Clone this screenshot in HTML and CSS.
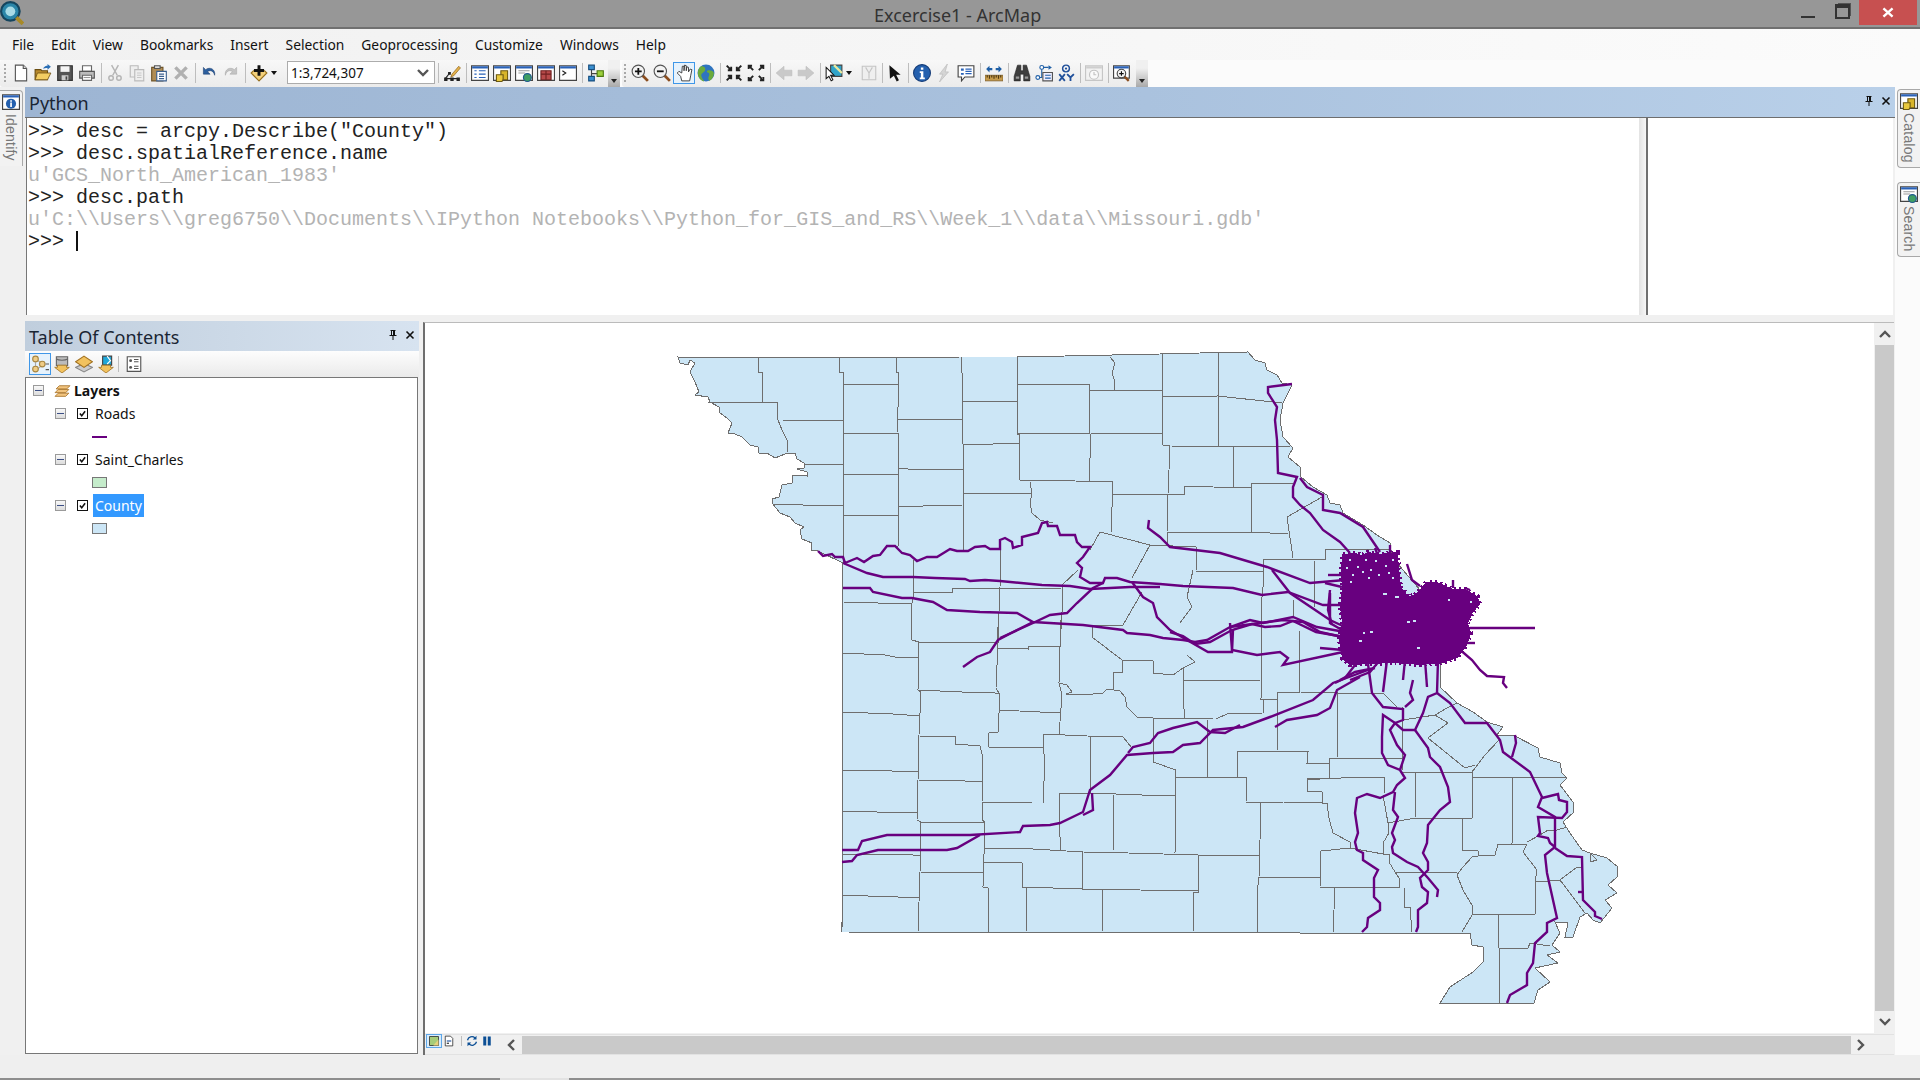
FILE: index.html
```html
<!DOCTYPE html>
<html lang="en">
<head>
  <meta charset="UTF-8">
  <title>Excercise1 - ArcMap</title>
  <link rel="stylesheet" href="styles.css">
</head>
<body>
  <!-- Icon sprite, 16x16 grid -->
  <svg class="sprite" xmlns="http://www.w3.org/2000/svg">
    <symbol id="i-new" viewBox="0 0 16 16"><path d="M3 1h7l3 3v11H3z" fill="#fff" stroke="#555"/><path d="M10 1v3h3" fill="#ddd" stroke="#555"/></symbol>
    <symbol id="i-open" viewBox="0 0 16 16"><path d="M1 14V5h5l1 1h5v8z" fill="#b98a2c" stroke="#6b4e12"/><path d="M1 14l2-6h12l-3 6z" fill="#f3cd62" stroke="#6b4e12" stroke-width=".7"/><path d="M8 4c1-2 3-2.500 4-2.500V0l3 2.500L12 5V3.500C10 3.500 9 4 8 4z" fill="#2b6fb5"/></symbol>
    <symbol id="i-save" viewBox="0 0 16 16"><path d="M1.500 1.500h13v13h-13z" fill="#555" stroke="#333"/><path d="M4 2h8v5H4z" fill="#f4f4f4"/><path d="M5 10h6v4.500H5z" fill="#ccc"/><path d="M8.500 11h1.500v3H8.500z" fill="#444"/></symbol>
    <symbol id="i-print" viewBox="0 0 16 16"><path d="M4 1.500h8v5H4z" fill="#fff" stroke="#666"/><path d="M1.500 6.500h13v6h-13z" fill="#bbb" stroke="#555"/><path d="M4 10h8v4.500H4z" fill="#fff" stroke="#666"/><path d="M5 12h6" stroke="#999"/></symbol>
    <symbol id="i-cut" viewBox="0 0 16 16"><g fill="none" stroke="#b5b5b5" stroke-width="1.300"><path d="M5 1l5 9M11 1L6 10"/><circle cx="4.500" cy="12.500" r="2"/><circle cx="11.500" cy="12.500" r="2"/></g></symbol>
    <symbol id="i-copy" viewBox="0 0 16 16"><g fill="#eee" stroke="#bbb"><path d="M2 1.500h7v10H2z"/><path d="M6 5h8v10H6z"/></g><path d="M8 8h4M8 10h4M8 12h4" stroke="#c8c8c8"/></symbol>
    <symbol id="i-paste" viewBox="0 0 16 16"><path d="M1.500 3h10v12h-10z" fill="#b08d55" stroke="#6e5428"/><path d="M4 1.500h5V4H4z" fill="#ddd" stroke="#555"/><path d="M6 6.500h8.500v8.500H6z" fill="#fff" stroke="#3b5f8e"/><path d="M8 9h4.500M8 11h4.500M8 13h4.500" stroke="#3b5f8e"/></symbol>
    <symbol id="i-del" viewBox="0 0 16 16"><path d="M3 3l10 10M13 3L3 13" stroke="#b0b0b0" stroke-width="3"/></symbol>
    <symbol id="i-undo" viewBox="0 0 16 16"><path d="M3 3v6h6L6.700 6.800C9 5 12 6 13 10c1-5-4-8-8-5z" fill="#2c5f9e" stroke="#1c3f70" stroke-width=".5"/></symbol>
    <symbol id="i-redo" viewBox="0 0 16 16"><path d="M13 3v6H7l2.300-2.200C7 5 4 6 3 10c-1-5 4-8 8-5z" fill="#c4c4c4" stroke="#aaa" stroke-width=".5"/></symbol>
    <symbol id="i-add" viewBox="0 0 16 16"><path d="M8 15L1 8l2-2h10l2 2z" fill="#f3d07a" stroke="#96701f"/><path d="M6.700 1h2.600v3.500h3.200v2.600H9.300v3.400H6.700V7.100H3.500V4.500h3.200z" fill="#111"/></symbol>
    <symbol id="i-editor" viewBox="0 0 16 16"><path d="M2 13h12M2 13l4-5" stroke="#222" fill="none"/><path d="M1 12h3v3H1zM6.500 12h3v3h-3zM12 12h3v3h-3zM4.500 7h2.500v2.500H4.500z" fill="#222"/><path d="M8 9l6-7 1.500 1.500-6 7-2.500 1z" fill="#e5b24c" stroke="#8a5e10" stroke-width=".6"/></symbol>
    <symbol id="i-toc" viewBox="0 0 16 16"><path d="M.5 1.500h15v13H.5z" fill="#fff" stroke="#444"/><path d="M1 2h14v2H1z" fill="#2a62b8"/><path d="M3 6h2M7 6h6M3 9h2M7 9h6M3 12h2M7 12h6" stroke="#2a62b8"/></symbol>
    <symbol id="i-cat" viewBox="0 0 16 16"><path d="M.5 1.500h15v13H.5z" fill="#fff" stroke="#444"/><path d="M1 2h14v2H1z" fill="#2a62b8"/><path d="M7 6h6v8H7z" fill="#d8b52a" stroke="#6d5a10"/><path d="M3 9.500h6v4l-1 2H3z" fill="#e9c93e" stroke="#6d5a10"/></symbol>
    <symbol id="i-search" viewBox="0 0 16 16"><path d="M.5 1.500h15v13H.5z" fill="#fff" stroke="#444"/><path d="M1 2h14v2H1z" fill="#2a62b8"/><path d="M3 6h10M3 8h6" stroke="#999"/><circle cx="11" cy="12" r="3.500" fill="#3f9e63" stroke="#21598f"/></symbol>
    <symbol id="i-box" viewBox="0 0 16 16"><path d="M.5 1.500h15v13H.5z" fill="#fff" stroke="#444"/><path d="M1 2h14v2H1z" fill="#2a62b8"/><path d="M3.500 6h9v8h-9z" fill="#b84a4a" stroke="#702020"/><path d="M3.500 9h9M8 6v8" stroke="#702020"/></symbol>
    <symbol id="i-py" viewBox="0 0 16 16"><path d="M.5 1.500h15v13H.5z" fill="#fff" stroke="#444"/><path d="M1 2h14v2H1z" fill="#2a62b8"/><path d="M3 6l3 2-3 2" fill="none" stroke="#222"/></symbol>
    <symbol id="i-model" viewBox="0 0 16 16"><path d="M4 4v9M4 8.500h6" stroke="#444" fill="none"/><path d="M1.500 1h5v4h-5zM1.500 11h5v4h-5z" fill="#3a8fd0" stroke="#174f80"/><path d="M9 6h5.500v5H9z" fill="#9ccf3c" stroke="#4d7a10"/></symbol>
    <symbol id="i-zin" viewBox="0 0 16 16"><path d="M10 10l5 5" stroke="#8a4d1e" stroke-width="2.500"/><circle cx="6.500" cy="6.500" r="5.500" fill="#f3f3f3" stroke="#555"/><path d="M3.500 6.500h6M6.500 3.500v6" stroke="#111" stroke-width="1.600"/></symbol>
    <symbol id="i-zout" viewBox="0 0 16 16"><path d="M10 10l5 5" stroke="#8a4d1e" stroke-width="2.500"/><circle cx="6.500" cy="6.500" r="5.500" fill="#f3f3f3" stroke="#555"/><path d="M3.500 6.500h6" stroke="#111" stroke-width="1.600"/></symbol>
    <symbol id="i-hand" viewBox="0 0 16 16"><path d="M2 8l3 3 1 4h7l1-5 1-5-1.500-.5L12 7V3l-1.500-.5L10 6V1.500L8.500 1 8 6V2L6.500 2 6 8 3.500 6.500z" fill="#fff" stroke="#333" stroke-width=".8"/></symbol>
    <symbol id="i-globe" viewBox="0 0 16 16"><circle cx="8" cy="8" r="7.500" fill="#2f74bf"/><path d="M4 2c3 0 4 2 3 4S3 8 4 11s3 4 2 4.500C2 14 0 10 1 6c.5-2 1.500-3.500 3-4zM9 6c3-1 5 0 6 2 0 3-1 5-4 7-2-3 0-4 0-6S8 8 9 6z" fill="#6cab3c"/></symbol>
    <symbol id="i-fin" viewBox="0 0 16 16"><path d="M1.500 1.500l4 4M5.500 2.500v3h-3M14.500 1.500l-4 4M10.500 2.500v3h3M1.500 14.500l4-4M5.500 13.500v-3h-3M14.500 14.500l-4-4M10.500 13.500v-3h3" fill="none" stroke="#222" stroke-width="1.700"/></symbol>
    <symbol id="i-fout" viewBox="0 0 16 16"><path d="M5.500 5.500l-4-4M1.500 4.500v-3h3M10.500 5.500l4-4M14.500 4.500v-3h-3M5.500 10.500l-4 4M1.500 11.500v3h3M10.500 10.500l4 4M14.500 11.500v3h-3" fill="none" stroke="#222" stroke-width="1.700"/></symbol>
    <symbol id="i-back" viewBox="0 0 16 16"><path d="M1 8l7-6v3.500h7v5H8V14z" fill="#c9c9c9" stroke="#bbb" stroke-width=".5"/></symbol>
    <symbol id="i-fwd" viewBox="0 0 16 16"><path d="M15 8L8 2v3.500H1v5h7V14z" fill="#c9c9c9" stroke="#bbb" stroke-width=".5"/></symbol>
    <symbol id="i-sel" viewBox="0 0 16 16"><path d="M5 1h10v10H5z" fill="#2fa3c9" stroke="#444"/><path d="M8 1l7 7" stroke="#e8e8a0" stroke-width="2"/><path d="M1 3l7 7H5l2 4-1.500 1-2-4L1 13z" fill="#fff" stroke="#111" stroke-width=".9"/></symbol>
    <symbol id="i-clear" viewBox="0 0 16 16"><path d="M2 2h12v12H2z" fill="#efefef" stroke="#c4c4c4"/><path d="M5 3l3 5 3-5M8 8v5" fill="none" stroke="#c4c4c4"/></symbol>
    <symbol id="i-ptr" viewBox="0 0 16 16"><path d="M3 1l10 8.500H9l2.500 5-2 1L7 10.500 3.500 13z" fill="#111"/></symbol>
    <symbol id="i-info" viewBox="0 0 16 16"><circle cx="8" cy="8" r="7.500" fill="#2460ae" stroke="#163d78"/><path d="M7 3h2.200v2H7zM6 6.500h3.200V12H10.500v1.500h-4.500V12h1V8H6z" fill="#fff"/></symbol>
    <symbol id="i-identify" viewBox="0 0 16 16"><path d="M.5 1.500h15v13H.5z" fill="#fff" stroke="#444"/><path d="M1 2h14v2H1z" fill="#2a62b8"/><circle cx="8" cy="9.500" r="4.500" fill="#2460ae"/><path d="M7.300 6.500h1.500v1.300H7.300zM7.300 8.500h1.500v4H7.300z" fill="#fff"/></symbol>
    <symbol id="i-bolt" viewBox="0 0 16 16"><path d="M11 0L4 9h3l-3 7 8-9H9z" fill="#d5d5d5" stroke="#bbb" stroke-width=".6"/></symbol>
    <symbol id="i-popup" viewBox="0 0 16 16"><path d="M1 1.500h14v10H7l-3 3.500v-3.500H1z" fill="#fff" stroke="#444"/><path d="M3.500 4h2.500v2H3.500zM3.500 8h2.500v1.500H3.500z" fill="#2a62b8"/><path d="M7.500 4.500h5.500M7.500 6.500h5.500M7.500 8.500h5.500" stroke="#2a62b8"/></symbol>
    <symbol id="i-meas" viewBox="0 0 16 16"><path d="M0 10h16v5H0z" fill="#c59a4a" stroke="#6e5020" stroke-width=".6"/><path d="M2 10v2M4 10v3M6 10v2M8 10v3M10 10v2M12 10v3M14 10v2" stroke="#4d3710"/><path d="M1 4.500l3-3v2h2.500v2H4v2zM15 4.500l-3-3v2H9.500v2H12v2z" fill="#1f5fa6"/></symbol>
    <symbol id="i-find" viewBox="0 0 16 16"><path d="M4 1h3v5h2V1h3l3 10v4H9.500V9h-3v6H1v-4z" fill="#3e3e3e" stroke="#1d1d1d" stroke-width=".5"/><path d="M2.500 11h3v2h-3zM10.500 11h3v2h-3z" fill="#999"/></symbol>
    <symbol id="i-route" viewBox="0 0 16 16"><path d="M6 3v9H3M6 3h6" fill="none" stroke="#1f5fa6"/><circle cx="6" cy="3" r="1.700" fill="#fff" stroke="#1f5fa6"/><circle cx="2.500" cy="12" r="1.700" fill="#fff" stroke="#1f5fa6"/><path d="M12 1l3 2-3 2z" fill="#1f5fa6"/><path d="M7 7.500h8.500V15H7z" fill="#eef" stroke="#555"/><path d="M9 10h5M9 12.500h5" stroke="#1f5fa6"/></symbol>
    <symbol id="i-xy" viewBox="0 0 16 16"><circle cx="8" cy="4" r="3" fill="none" stroke="#1f4f9a" stroke-width="1.300"/><circle cx="8" cy="4" r="1" fill="#1f4f9a"/><path d="M2 9l5 6M7 9l-5 6M9 9l3 3 3-3M12 12v3" fill="none" stroke="#1f4f9a" stroke-width="1.600"/></symbol>
    <symbol id="i-time" viewBox="0 0 16 16"><path d="M.5 1.500h15v13H.5z" fill="#f2f2f2" stroke="#c6c6c6"/><path d="M1 2h14v2H1z" fill="#cfcfcf"/><circle cx="8" cy="9.500" r="4" fill="#fafafa" stroke="#c2c2c2"/><path d="M8 7v2.500h2" fill="none" stroke="#c2c2c2"/></symbol>
    <symbol id="i-view" viewBox="0 0 16 16"><path d="M.5 1.500h14v11H.5z" fill="#fff" stroke="#444"/><path d="M1 2h13v2H1z" fill="#2a62b8"/><path d="M10 11l4 4" stroke="#8a4d1e" stroke-width="2"/><circle cx="7.500" cy="8.500" r="3.800" fill="#f3f3f3" stroke="#444"/><path d="M5.500 8.500h4M7.500 6.500v4" stroke="#111"/></symbol>
    <symbol id="i-tdraw" viewBox="0 0 16 16"><path d="M4 4v9M5 4l5 4M5 13l5-4" stroke="#aaa" fill="none"/><circle cx="4" cy="3.500" r="2.500" fill="#efcc86" stroke="#a88640"/><circle cx="4" cy="12.500" r="2.500" fill="#efcc86" stroke="#a88640"/><circle cx="10" cy="8" r="2.500" fill="#efcc86" stroke="#a88640"/><path d="M13 8h3M13 13h3" stroke="#555"/></symbol>
    <symbol id="i-tsrc" viewBox="0 0 16 16"><path d="M3 1.500h10v8H3z" fill="#bcbcbc" stroke="#666"/><path d="M3 3.500c2 1.500 8 1.500 10 0" fill="none" stroke="#666"/><path d="M4 9h8v2h2.500L8 16 1.500 11H4z" fill="#f2c25e" stroke="#a0701f" stroke-width=".7"/></symbol>
    <symbol id="i-tvis" viewBox="0 0 16 16"><path d="M8 7.500L15.500 11 8 15 .5 11z" fill="#ccc" stroke="#888"/><path d="M8 1l7.500 5L8 11 .5 6z" fill="#f2c25e" stroke="#a0701f"/></symbol>
    <symbol id="i-tsel" viewBox="0 0 16 16"><path d="M5 1h8v8H5z" fill="#20a7d8" stroke="#444"/><path d="M9 1l3 4-3 3" fill="none" stroke="#fff"/><path d="M4 9h8v2h2.500L8 16 1.500 11H4z" fill="#f2c25e" stroke="#a0701f" stroke-width=".7"/></symbol>
    <symbol id="i-topt" viewBox="0 0 16 16"><path d="M2 1.500h12v13H2z" fill="#fff" stroke="#555"/><circle cx="5" cy="5" r="1.300" fill="#555"/><circle cx="5" cy="11" r="1.300" fill="#555"/><path d="M8 4h4M8 6h4M8 10h4M8 12h4" stroke="#555"/></symbol>
    <symbol id="i-layers" viewBox="0 0 16 16"><g fill="#f2c47e" stroke="#a8742a" stroke-width=".8"><path d="M1 13.500h10l3-3H4z"/><path d="M1 10h10l3-3H4z"/><path d="M2 6.500h10l3-3H5z"/></g></symbol>
    <symbol id="i-check" viewBox="0 0 12 12"><path d="M2.500 6l2.500 3 4.500-6" fill="none" stroke="#111" stroke-width="2"/></symbol>
    <symbol id="i-pin" viewBox="0 0 10 10"><path d="M2.500 0h5v1H7v4h1.500v1h-3v4h-1V6h-3V5H3V1h-.5zM4 1v4h1V1z" fill="#111"/></symbol>
    <symbol id="i-close" viewBox="0 0 10 10"><path d="M1.500 1.500l7 7M8.500 1.500l-7 7" stroke="#111" stroke-width="1.600"/></symbol>
    <symbol id="i-dataview" viewBox="0 0 16 16"><path d="M2 2h12v12H2z" fill="#a6cc7a" stroke="#222"/><path d="M7 14l7-8v8z" fill="#e7d27c"/></symbol>
    <symbol id="i-layoutview" viewBox="0 0 16 16"><path d="M3 1.500h7l3 3v10H3z" fill="#fff" stroke="#222"/><path d="M5 8h6" stroke="#1f4f9a" stroke-width="1.500"/><path d="M5 11h3" stroke="#222" stroke-width="1.500"/></symbol>
    <symbol id="i-refresh" viewBox="0 0 16 16"><path d="M2 7a6 6 0 0 1 10-3M14 9a6 6 0 0 1-10 3" fill="none" stroke="#0c4f95" stroke-width="1.700"/><path d="M14 1v5H9zM2 15v-5h5z" fill="#0c4f95"/></symbol>
    <symbol id="i-pause" viewBox="0 0 16 16"><path d="M3 2h4v12H3zM9 2h4v12H9z" fill="#0c4f95"/></symbol>
    <symbol id="i-chev-l" viewBox="0 0 10 12"><path d="M8 1L3 6l5 5" fill="none" stroke="#555" stroke-width="2.400"/></symbol>
    <symbol id="i-chev-r" viewBox="0 0 10 12"><path d="M2 1l5 5-5 5" fill="none" stroke="#555" stroke-width="2.400"/></symbol>
    <symbol id="i-chev-d" viewBox="0 0 12 10"><path d="M1 2l5 5 5-5" fill="none" stroke="#555" stroke-width="2.400"/></symbol>
    <symbol id="i-chev-u" viewBox="0 0 12 10"><path d="M1 8l5-5 5 5" fill="none" stroke="#555" stroke-width="2.400"/></symbol>
  </svg>

  <div class="app">
    <header class="titlebar">
      <svg class="app-icon" viewBox="0 0 22 22">
        <circle cx="9.500" cy="9.500" r="8.500" fill="#2b86a8" stroke="#15455e" stroke-width="2"/>
        <circle cx="9.500" cy="9.500" r="4.500" fill="#a8dbe6"/>
        <path d="M15 15l6 6" stroke="#a88a28" stroke-width="3.500"/>
      </svg>
      <span class="title-text">Excercise1 - ArcMap</span>
      <div class="win-controls">
        <span class="win-min"></span>
        <span class="win-restore"></span>
        <span class="win-close"><svg viewBox="0 0 12 12"><path d="M1 1.500l10 9M11 1.500l-10 9" stroke="#fff" stroke-width="2.600"/></svg></span>
      </div>
    </header>

    <nav class="menubar">
      <span>File</span><span>Edit</span><span>View</span><span>Bookmarks</span><span>Insert</span><span>Selection</span><span>Geoprocessing</span><span>Customize</span><span>Windows</span><span>Help</span>
    </nav>

    <div class="toolband">
      <div class="toolbar toolbar-main">
        <i class="grip"></i>
        <svg class="tb"><use href="#i-new"/></svg>
        <svg class="tb"><use href="#i-open"/></svg>
        <svg class="tb"><use href="#i-save"/></svg>
        <svg class="tb"><use href="#i-print"/></svg>
        <i class="sep"></i>
        <svg class="tb"><use href="#i-cut"/></svg>
        <svg class="tb"><use href="#i-copy"/></svg>
        <svg class="tb"><use href="#i-paste"/></svg>
        <svg class="tb"><use href="#i-del"/></svg>
        <i class="sep"></i>
        <svg class="tb"><use href="#i-undo"/></svg>
        <svg class="tb"><use href="#i-redo"/></svg>
        <i class="sep"></i>
        <svg class="tb"><use href="#i-add"/></svg>
        <i class="drop"></i>
        <div class="scale-box"><span>1:3,724,307</span><svg class="scale-arrow"><use href="#i-chev-d"/></svg></div>
        <i class="sep"></i>
        <svg class="tb"><use href="#i-editor"/></svg>
        <i class="sep"></i>
        <svg class="tb"><use href="#i-toc"/></svg>
        <svg class="tb"><use href="#i-cat"/></svg>
        <svg class="tb"><use href="#i-search"/></svg>
        <svg class="tb"><use href="#i-box"/></svg>
        <svg class="tb"><use href="#i-py"/></svg>
        <i class="sep"></i>
        <svg class="tb"><use href="#i-model"/></svg>
        <i class="overflow"></i>
      </div>
      <div class="toolbar toolbar-tools">
        <i class="grip"></i>
        <svg class="tb"><use href="#i-zin"/></svg>
        <svg class="tb"><use href="#i-zout"/></svg>
        <svg class="tb tb-active"><use href="#i-hand"/></svg>
        <svg class="tb"><use href="#i-globe"/></svg>
        <i class="sep"></i>
        <svg class="tb"><use href="#i-fin"/></svg>
        <svg class="tb"><use href="#i-fout"/></svg>
        <i class="sep"></i>
        <svg class="tb"><use href="#i-back"/></svg>
        <svg class="tb"><use href="#i-fwd"/></svg>
        <i class="sep"></i>
        <svg class="tb"><use href="#i-sel"/></svg>
        <i class="drop"></i>
        <svg class="tb tb-narrow tb-clear"><use href="#i-clear"/></svg>
        <i class="sep"></i>
        <svg class="tb tb-narrow"><use href="#i-ptr"/></svg>
        <i class="sep"></i>
        <svg class="tb"><use href="#i-info"/></svg>
        <svg class="tb"><use href="#i-bolt"/></svg>
        <svg class="tb"><use href="#i-popup"/></svg>
        <i class="sep"></i>
        <svg class="tb"><use href="#i-meas"/></svg>
        <i class="sep"></i>
        <svg class="tb"><use href="#i-find"/></svg>
        <svg class="tb"><use href="#i-route"/></svg>
        <svg class="tb"><use href="#i-xy"/></svg>
        <i class="sep"></i>
        <svg class="tb"><use href="#i-time"/></svg>
        <i class="sep"></i>
        <svg class="tb"><use href="#i-view"/></svg>
        <i class="overflow"></i>
      </div>
    </div>

    <div class="workspace">
      <aside class="rail rail-left">
        <div class="rail-tab tab-identify">
          <svg class="tab-icon"><use href="#i-identify"/></svg>
          <span>Identify</span>
        </div>
      </aside>

      <main class="center">
        <section class="python-panel">
          <div class="dock-header header-python">
            <span>Python</span>
            <span class="dock-btns"><svg><use href="#i-pin"/></svg><svg><use href="#i-close"/></svg></span>
          </div>
          <div class="python-body">
            <pre class="console"><span>&gt;&gt;&gt; desc = arcpy.Describe("County")</span>
<span>&gt;&gt;&gt; desc.spatialReference.name</span>
<span class="out">u'GCS_North_American_1983'</span>
<span>&gt;&gt;&gt; desc.path</span>
<span class="out">u'C:\\Users\\greg6750\\Documents\\IPython Notebooks\\Python_for_GIS_and_RS\\Week_1\\data\\Missouri.gdb'</span>
<span>&gt;&gt;&gt; <b class="caret"></b></span></pre>
            <div class="splitter"></div>
            <div class="help-pane"></div>
          </div>
        </section>

        <div class="lower">
          <section class="toc-panel">
            <div class="dock-header header-toc">
              <span>Table Of Contents</span>
              <span class="dock-btns"><svg><use href="#i-pin"/></svg><svg><use href="#i-close"/></svg></span>
            </div>
            <div class="toc-tools">
              <svg class="tt tb-active"><use href="#i-tdraw"/></svg>
              <svg class="tt"><use href="#i-tsrc"/></svg>
              <svg class="tt"><use href="#i-tvis"/></svg>
              <svg class="tt"><use href="#i-tsel"/></svg>
              <i class="sep"></i>
              <svg class="tt"><use href="#i-topt"/></svg>
            </div>
            <div class="tree">
              <div class="row row-root"><i class="minus"></i><svg class="layers-icon"><use href="#i-layers"/></svg><b>Layers</b></div>
              <div class="row row-layer"><i class="minus"></i><i class="check"><svg><use href="#i-check"/></svg></i><span>Roads</span></div>
              <div class="row row-legend"><i class="legend-line"></i></div>
              <div class="row row-layer"><i class="minus"></i><i class="check"><svg><use href="#i-check"/></svg></i><span>Saint_Charles</span></div>
              <div class="row row-legend"><i class="swatch swatch-green"></i></div>
              <div class="row row-layer"><i class="minus"></i><i class="check"><svg><use href="#i-check"/></svg></i><span class="selected">County</span></div>
              <div class="row row-legend"><i class="swatch swatch-blue"></i></div>
            </div>
          </section>

          <section class="map-frame">
            <div class="map-top">
              <svg class="map" viewBox="425 323 1449 710" width="1449" height="710">
                <!-- state outline -->
                <path class="state" d="M678 357L843 358 961 357 1017 357 1160 354 1200 353 1248 352 1255 360 1265 363 1267 370 1277 375 1282 383 1292 385 1283 403 1280 420 1283 437 1293 448 1288 457 1300 467 1301 477 1313 487 1327 495 1330 503 1340 505 1343 513 1363 525 1377 535 1390 543 1392 557 1420 590 1445 640 1440 670 1440 687 1457 703 1473 712 1487 722 1503 727 1497 735 1513 735 1538 748 1540 757 1560 763 1562 773 1567 778 1560 785 1573 802 1574 812 1563 822 1570 833 1582 850 1590 853 1597 860 1590 862 1590 853 1607 858 1618 867 1617 877 1608 885 1617 893 1605 900 1612 908 1600 923 1593 920 1587 913 1580 917 1573 937 1565 937 1568 923 1555 922 1560 933 1552 945 1560 952 1547 955 1558 963 1535 968 1550 982 1538 990 1534 1003 1440 1003 1450 987 1473 972 1483 962 1483 947 1472 945 1470 933 1300 933 842 932 843 563 818 551 811 550 812 543 802 539 800 530 804 527 795 523 790 517 780 513 772 503 772 499 779 497 782 485 792 483 793 475 807 476 807 472 797 469 804 468 804 463 797 459 795 453 785 454 775 458 767 453 759 453 758 447 750 445 742 437 735 434 728 433 732 423 727 418 720 413 719 407 710 402 708 397 695 395 699 392 695 382 690 372 695 363 690 360 688 365 680 363z"/>

                <!-- county lines -->
                <g class="counties">
                  <polyline points="758,357 758,372 762,372 762,402"/>
                  <polyline points="839,358 839,372 843,372 843,563"/>
                  <polyline points="896,358 896,372 898,372 898,407 897,433 899,435 898,547"/>
                  <polyline points="961,357 962,373 962,440 963,444 963,550"/>
                  <polyline points="1017,357 1017,372 1018,434 1019,434 1019,480"/>
                  <polyline points="1089,384 1089,433 1091,435 1089,481"/>
                  <polyline points="1113,482 1111,533"/>
                  <polyline points="708,402 778,402 777,410 778,420 782,430 787,440 788,452"/>
                  <polyline points="782,420 843,421"/>
                  <polyline points="805,464 843,464"/>
                  <polyline points="773,504 803,505 843,505"/>
                  <polyline points="843,384 898,384"/>
                  <polyline points="843,433 899,433"/>
                  <polyline points="843,474 899,474"/>
                  <polyline points="843,515 899,515"/>
                  <polyline points="897,419 962,420"/>
                  <polyline points="899,468 908,469 963,469"/>
                  <polyline points="899,506 923,506 963,505"/>
                  <polyline points="962,401 1017,401"/>
                  <polyline points="963,444 993,444 1019,443"/>
                  <polyline points="963,493 1032,493"/>
                  <polyline points="1018,384 1089,384"/>
                  <polyline points="1018,434 1091,433"/>
                  <polyline points="1019,480 1075,481 1113,482"/>
                  <polyline points="1089,390 1162,390"/>
                  <polyline points="1091,433 1163,433"/>
                  <polyline points="1113,494 1184,494 1184,486 1213,487 1251,488"/>
                  <polyline points="1110,357 1115,363 1112,373 1115,382 1114,390"/>
                  <polyline points="1030,482 1032,493 1030,503 1032,513 1040,520 1053,523"/>
                  <polyline points="913,560 913,597 912,603 911,620 912,640 919,642"/>
                  <polyline points="1001,550 1000,587 999,612 997,642"/>
                  <polyline points="1062,585 1062,612 1060,647"/>
                  <polyline points="1100,532 1150,545 1132,578"/>
                  <polyline points="1100,532 1090,550"/>
                  <polyline points="1062,585 1078,570"/>
                  <polyline points="1142,592 1123,625 1083,625"/>
                  <polyline points="1150,545 1196,547 1196,570"/>
                  <polyline points="843,602 878,603 912,603"/>
                  <polyline points="913,592 952,592 952,588 1000,589 1062,588"/>
                  <polyline points="1162,354 1162,397 1163,445"/>
                  <polyline points="1218,353 1218,403 1218,446"/>
                  <polyline points="1162,397 1218,396 1282,403"/>
                  <polyline points="1163,445 1170,446 1290,447"/>
                  <polyline points="1170,446 1168,494 1167,532 1167,545"/>
                  <polyline points="1233,447 1233,487"/>
                  <polyline points="1251,483 1293,483"/>
                  <polyline points="1251,483 1251,533"/>
                  <polyline points="1167,532 1198,532 1251,532 1288,534"/>
                  <polyline points="1287,517 1293,558"/>
                  <polyline points="1287,517 1322,497"/>
                  <polyline points="1263,560 1293,559 1325,560 1326,549 1390,549"/>
                  <polyline points="1263,560 1263,587 1261,607 1261,680"/>
                  <polyline points="1196,571 1263,571"/>
                  <polyline points="1193,570 1187,597 1192,607 1180,623"/>
                  <polyline points="1314,561 1314,607"/>
                  <polyline points="1293,600 1293,617"/>
                  <polyline points="1299,630 1300,692"/>
                  <polyline points="842,653 885,655 900,658 919,657"/>
                  <polyline points="919,642 918,690 921,692 919,735 918,780 917,820 921,822 920,872 918,932"/>
                  <polyline points="919,642 968,642 997,642"/>
                  <polyline points="998,620 998,643 996,688 1000,695 998,732 989,733 988,747"/>
                  <polyline points="918,690 962,692 990,692 1000,694"/>
                  <polyline points="842,712 893,714 920,716"/>
                  <polyline points="919,736 955,737 955,744 980,746"/>
                  <polyline points="980,746 983,758 982,802 982,820 985,822 983,887 988,888 988,932"/>
                  <polyline points="842,770 892,771 918,772"/>
                  <polyline points="918,780 965,781 982,782"/>
                  <polyline points="842,811 877,812 917,812"/>
                  <polyline points="921,822 985,822"/>
                  <polyline points="842,854 905,854 920,856"/>
                  <polyline points="920,872 983,873"/>
                  <polyline points="842,895 868,896 898,897 920,897"/>
                  <polyline points="998,648 1028,649 1028,646 1060,647"/>
                  <polyline points="1060,620 1060,647 1059,683 1062,695 1059,735"/>
                  <polyline points="999,710 1060,713"/>
                  <polyline points="988,747 1043,748"/>
                  <polyline points="1043,734 1043,748 1045,760 1043,803"/>
                  <polyline points="1043,734 1087,736 1123,737 1132,748"/>
                  <polyline points="1090,736 1090,793"/>
                  <polyline points="982,802 1032,803 1059,803"/>
                  <polyline points="1059,793 1059,823 1061,850"/>
                  <polyline points="1059,793 1090,793 1142,795 1175,796"/>
                  <polyline points="1113,795 1113,823 1114,850"/>
                  <polyline points="1176,770 1175,853"/>
                  <polyline points="1153,718 1153,762 1176,770"/>
                  <polyline points="1176,777 1247,777 1246,802"/>
                  <polyline points="1207,720 1207,777"/>
                  <polyline points="1237,751 1237,777"/>
                  <polyline points="1237,751 1308,752 1307,763 1329,763"/>
                  <polyline points="1246,802 1283,802 1322,803"/>
                  <polyline points="1261,803 1259,877 1257,893 1257,932"/>
                  <polyline points="1258,877 1320,878"/>
                  <polyline points="1198,855 1198,892 1194,892 1193,932"/>
                  <polyline points="1198,855 1259,855"/>
                  <polyline points="983,848 1033,849 1083,852 1128,853 1198,855"/>
                  <polyline points="983,862 1022,863 1022,887 1083,889"/>
                  <polyline points="1083,852 1082,889 1198,891"/>
                  <polyline points="1027,888 1026,932"/>
                  <polyline points="1103,889 1102,932"/>
                  <polyline points="1092,627 1092,637 1122,660 1153,661"/>
                  <polyline points="1122,660 1122,672 1113,672 1113,689"/>
                  <polyline points="1059,683 1067,685 1072,692 1066,694 1093,694 1103,693 1107,689 1120,691 1125,697 1127,707 1137,717 1153,718 1213,719"/>
                  <polyline points="1153,661 1153,673 1173,675 1183,668"/>
                  <polyline points="1183,668 1183,680 1183,698 1185,719"/>
                  <polyline points="1183,680 1228,680 1260,681"/>
                  <polyline points="1216,719 1227,714 1263,713"/>
                  <polyline points="1262,627 1261,699 1277,699"/>
                  <polyline points="1263,700 1263,713"/>
                  <polyline points="1277,692 1277,750"/>
                  <polyline points="1277,692 1300,692 1338,693 1383,693 1397,707"/>
                  <polyline points="1187,655 1195,662 1183,668"/>
                  <polyline points="1307,779 1320,779"/>
                  <polyline points="1338,693 1337,757"/>
                  <polyline points="1330,758 1402,758"/>
                  <polyline points="1330,758 1329,778"/>
                  <polyline points="1402,707 1402,770"/>
                  <polyline points="1307,778 1329,779 1353,777 1384,777 1384,793"/>
                  <polyline points="1307,778 1307,791 1322,792 1322,803 1327,803 1329,818 1333,833 1350,842 1350,848"/>
                  <polyline points="1321,851 1320,887"/>
                  <polyline points="1321,851 1350,848 1383,854 1389,854 1389,862 1395,872"/>
                  <polyline points="1383,795 1388,823 1389,833 1383,843 1383,854"/>
                  <polyline points="1395,872 1457,872"/>
                  <polyline points="1395,872 1399,878 1399,888"/>
                  <polyline points="1320,887 1335,887 1399,888 1404,888 1404,907 1410,907 1412,932"/>
                  <polyline points="1335,887 1333,933"/>
                  <polyline points="1416,772 1415,818 1388,823"/>
                  <polyline points="1402,772 1472,772"/>
                  <polyline points="1415,818 1472,818 1473,777 1472,772"/>
                  <polyline points="1472,772 1485,755 1499,740"/>
                  <polyline points="1403,720 1435,715 1448,723 1428,738 1465,768 1475,765"/>
                  <polyline points="1435,715 1447,708 1457,703"/>
                  <polyline points="1472,777 1513,777 1567,778"/>
                  <polyline points="1513,777 1512,844"/>
                  <polyline points="1462,818 1462,850 1478,851 1478,856 1495,855 1498,844 1527,844"/>
                  <polyline points="1478,856 1472,857 1463,867 1457,875 1463,890 1473,907 1472,915 1462,932"/>
                  <polyline points="1472,915 1535,914 1535,882 1550,881"/>
                  <polyline points="1498,915 1499,948 1499,1003"/>
                  <polyline points="1499,948 1528,948 1530,943 1550,946"/>
                  <polyline points="1527,844 1523,852 1537,870 1535,882"/>
                  <polyline points="1527,842 1540,835 1548,830 1557,830 1567,827"/>
                  <polyline points="1550,881 1560,880 1585,913"/>
                  <polyline points="1560,880 1577,867 1583,867"/>
                </g>

                <!-- roads -->
                <g class="roads">
                  <polyline points="818,551 823,556 832,554 835,557 843,557 845,563 857,558 864,562 873,556 880,555 887,546 895,546 902,553 910,555 917,561 927,557 937,557 950,549 957,551 968,551 975,547 985,546 990,549 1000,549 1000,540 1005,538 1012,542 1013,548 1022,545 1022,537 1038,533 1042,523 1047,522 1048,526 1057,526 1060,535 1075,535 1077,542 1082,547 1090,547 1083,557 1077,563 1082,568 1080,577 1090,583 1103,583 1105,578 1117,578 1130,582 1160,584 1183,586 1233,588 1262,595 1288,592 1323,605 1345,605"/>
                  <polyline points="843,563 867,573 883,577 913,577 935,578 965,579 970,581 985,580 1000,581 1042,585 1070,586 1090,589 1130,587 1160,587"/>
                  <polyline points="843,588 870,588 873,592 902,598 912,598 933,602 947,610 980,612 1017,613 1033,622 1083,625 1123,630 1127,633 1150,635 1163,638 1183,640 1195,642 1207,640 1230,627 1250,620 1263,623 1293,617 1317,627 1345,632"/>
                  <polyline points="1170,632 1183,636 1195,644 1210,642 1232,630 1252,624 1265,627 1280,626 1293,621 1316,632 1345,637"/>
                  <polyline points="1230,627 1260,623 1283,620 1303,622 1320,632 1342,637"/>
                  <polyline points="1149,520 1148,528 1160,537 1170,547 1220,553 1267,567 1310,583 1345,580"/>
                  <polyline points="1272,570 1290,593 1330,620 1345,627"/>
                  <polyline points="1330,593 1330,623 1342,630"/>
                  <polyline points="1325,583 1342,587"/>
                  <polyline points="1103,583 1093,588 1077,603 1067,613 1050,615 1033,623 1000,638"/>
                  <polyline points="1132,582 1143,597 1153,603 1157,617 1170,630 1187,640 1208,652 1232,652 1233,630"/>
                  <polyline points="963,667 977,657 990,652 998,640 1017,630 1033,622"/>
                  <polyline points="1292,384 1268,387 1268,393 1277,407 1275,420 1277,440 1278,473 1297,477 1293,487 1293,497 1300,505 1310,513 1323,530 1340,542 1350,553"/>
                  <polyline points="1300,478 1307,487 1323,495 1323,510 1340,513 1363,527 1380,552"/>
                  <polyline points="842,850 858,850 862,841 887,835 970,835 1020,832 1023,826 1050,825 1060,823 1083,812 1090,790 1110,775 1127,755 1153,753 1173,752 1183,745 1200,743 1213,730 1243,727 1270,717 1313,700 1333,683 1368,670"/>
                  <polyline points="842,862 852,861 857,855 878,850 947,850 957,848 980,835"/>
                  <polyline points="1128,753 1133,747 1150,743 1158,733 1173,728 1197,722 1210,732 1225,733 1240,725"/>
                  <polyline points="1092,793 1093,810 1083,815"/>
                  <polyline points="1275,727 1287,720 1317,715 1330,708 1337,690 1360,677"/>
                  <polyline points="1230,623 1232,650 1257,655 1280,652 1288,658 1283,665 1343,652"/>
                  <polyline points="1320,648 1343,650"/>
                  <polyline points="1407,564 1412,580 1420,586"/>
                  <polyline points="1470,628 1535,628"/>
                  <polyline points="1458,648 1472,660 1480,670 1487,676 1504,677 1503,683 1507,688"/>
                  <polyline points="1368,664 1372,693 1383,707 1403,709 1403,720 1395,723 1383,715 1382,737 1382,753 1388,765 1400,770 1405,778 1397,785 1393,792 1380,798 1367,794 1357,798 1355,813 1358,833 1355,842 1357,850 1363,853 1363,860 1378,870 1374,878 1374,897 1380,903 1380,910 1368,918 1367,927 1362,932"/>
                  <polyline points="1438,660 1437,693 1428,697 1423,713 1415,730 1403,730 1395,723 1390,730 1397,745 1405,755 1400,770"/>
                  <polyline points="1415,730 1428,748 1430,757 1440,767 1448,787 1450,802 1440,810 1428,825 1427,843 1423,853 1428,862 1428,870 1420,878 1422,887 1428,892 1427,903 1418,910 1418,927 1416,932"/>
                  <polyline points="1395,792 1393,810 1398,817 1392,833 1395,840 1392,847 1393,853 1407,862 1418,867 1428,878 1438,890 1437,897"/>
                  <polyline points="1437,693 1450,703 1465,723 1487,723 1500,740 1503,752 1530,772 1542,797 1538,807 1555,817 1555,847 1545,855 1547,873 1557,918 1547,923 1547,932 1535,943 1533,963 1527,973 1527,985 1510,995 1507,1003"/>
                  <polyline points="1555,848 1567,856 1582,857 1583,900 1595,912 1595,916 1602,919"/>
                  <polyline points="1542,798 1558,794 1559,800 1567,802 1567,812 1562,818 1538,817 1540,833 1538,836 1548,838 1550,843 1555,847"/>
                  <polyline points="1515,735 1516,743 1512,757"/>
                  <polyline points="1578,892 1583,892"/>
                  <polyline points="1425,660 1427,687"/>
                  <polyline points="1413,680 1410,693 1413,700 1405,707"/>
                  <polyline points="1387,660 1383,692"/>
                  <polyline points="1355,665 1345,678 1335,683"/>
                  <polyline points="1380,660 1370,672 1350,680"/>
                  <polyline points="1405,660 1403,680"/>
                  <polyline points="1340,680 1355,672 1375,668"/>
                  <polyline points="1367,550 1370,556"/>
                  <polyline points="1375,548 1378,556"/>
                  <polyline points="1390,545 1390,558"/>
                  <polyline points="1453,580 1453,588"/>
                  <polyline points="1465,588 1470,590"/>
                  <polyline points="1462,643 1475,643"/>
                  <polyline points="1328,575 1342,575"/>
                  <polyline points="1330,590 1328,610 1332,625"/>
                </g>

                <!-- St Louis cluster: fill, then a dashed edge to fray it -->
                <path class="metro" d="M1343 555L1355 554 1362 556 1368 553 1380 555 1397 553 1398 570 1400 587 1408 597 1415 596 1427 583 1437 583 1453 590 1465 590 1477 597 1479 604 1472 612 1467 623 1470 633 1466 645 1457 657 1443 662 1420 664 1395 662 1370 663 1350 664 1343 658 1340 640 1343 622 1341 607 1343 590 1342 573z"/>
                <path class="metro-edge" d="M1343 555L1355 554 1362 556 1368 553 1380 555 1397 553 1398 570 1400 587 1408 597 1415 596 1427 583 1437 583 1453 590 1465 590 1477 597 1479 604 1472 612 1467 623 1470 633 1466 645 1457 657 1443 662 1420 664 1395 662 1370 663 1350 664 1343 658 1340 640 1343 622 1341 607 1343 590 1342 573z"/>
                <path class="specks" d="M1383 594h4M1395 597h4M1407 622h3M1413 621h3M1363 633h2M1370 632h3M1417 648h3M1368 578h2M1357 567h2M1370 570h2M1365 560h2M1385 566h2M1352 575h2M1388 573h2M1448 600h2M1470 602h2M1359 641h3M1349 560h2M1375 561h2M1392 560h2M1346 568h2M1362 572h2M1378 575h2M1392 578h2M1350 582h2"/>
              </svg>
              <div class="vscroll">
                <svg class="sb-arrow-v"><use href="#i-chev-u"/></svg>
                <div class="vthumb"></div>
                <svg class="sb-arrow-v"><use href="#i-chev-d"/></svg>
              </div>
            </div>
            <div class="map-bottom">
              <div class="view-tools">
                <svg class="vt vt-on"><use href="#i-dataview"/></svg>
                <svg class="vt"><use href="#i-layoutview"/></svg>
                <i class="sep"></i>
                <svg class="vt"><use href="#i-refresh"/></svg>
                <svg class="vt"><use href="#i-pause"/></svg>
              </div>
              <svg class="sb-arrow-h"><use href="#i-chev-l"/></svg>
              <div class="hthumb"></div>
              <svg class="sb-arrow-h"><use href="#i-chev-r"/></svg>
            </div>
          </section>
        </div>
      </main>

      <aside class="rail rail-right">
        <div class="rail-tab tab-catalog">
          <svg class="tab-icon"><use href="#i-cat"/></svg>
          <span>Catalog</span>
        </div>
        <div class="rail-tab tab-search">
          <svg class="tab-icon"><use href="#i-search"/></svg>
          <span>Search</span>
        </div>
      </aside>
    </div>

    <footer class="statusbar"><i class="task-tab"></i></footer>
  </div>
</body>
</html>
```

FILE: styles.css
```css
* {
  box-sizing: border-box;
}
html, body {
  margin: 0;
  padding: 0;
}
body {
  font-family: "Noto Sans", sans-serif;
  background-color: #f0f0f0;
  color: #111;
}
i {
  display: block;
  font-style: normal;
}
.sprite {
  display: none;
}
.app {
  width: 1920px;
  height: 1080px;
  display: flex;
  flex-direction: column;
  overflow: hidden;
}

/* Title bar */
.titlebar {
  height: 29px;
  flex: none;
  display: flex;
  align-items: flex-start;
  background-color: #979797;
  border-bottom: 2px solid #707070;
}
.app-icon {
  width: 24px;
  height: 24px;
  flex: none;
  margin-top: 1px;
}
.title-text {
  margin-left: 850px;
  width: 171px;
  font-size: 18px;
  line-height: 30px;
  color: #333;
  white-space: nowrap;
}
.win-controls {
  margin-left: auto;
  display: flex;
  align-items: flex-start;
  margin-right: 3px;
}
.win-min {
  width: 14px;
  height: 2px;
  margin-top: 16px;
  background-color: #333;
}
.win-restore {
  width: 15px;
  height: 15px;
  margin: 4px 9px 0 20px;
  border: 2px solid #333;
  border-top-width: 4px;
  box-shadow: 2px -2px 0 -1px #555;
}
.win-close {
  width: 58px;
  height: 25px;
  background-color: #c75050;
  display: flex;
  align-items: center;
  justify-content: center;
}
.win-close svg {
  width: 12px;
  height: 11px;
}

/* Menu */
.menubar {
  height: 31px;
  flex: none;
  display: flex;
  align-items: center;
  gap: 17px;
  padding: 0 0 0 12px;
  font-size: 13.800px;
  background: linear-gradient(90deg, #f1f1f1, #f6f6f6 50%, #fbfbfb);
}

/* Toolbars */
.toolband {
  height: 27px;
  flex: none;
  display: flex;
  gap: 2px;
  background-color: #fbfbfb;
}
.toolbar {
  height: 27px;
  flex: none;
  display: flex;
  align-items: center;
  background: linear-gradient(180deg, #f8f8f8, #ebebeb);
  border-radius: 3px 0 0 3px;
  padding: 0 0 2px 0;
}
.toolbar-main {
  width: 620px;
  padding-left: 2px;
}
.toolbar-tools {
  width: 526px;
}
.grip {
  width: 6px;
  height: 18px;
  flex: none;
  margin-right: 2px;
  background: repeating-linear-gradient(180deg, #a8a8a8 0 2px, transparent 2px 4px) center / 2px 100% no-repeat;
}
.toolbar-tools .grip {
  margin-right: 1px;
}
.tb {
  width: 22px;
  height: 22px;
  flex: none;
  padding: 2px;
  display: block;
}
.tb-narrow {
  width: 20px;
  padding: 2px 1px;
}
.tb-clear {
  margin-left: 6px;
}
.tb-active {
  outline: 1px solid #3f97e8;
  outline-offset: -1px;
  background-color: #e6f2fc;
}
.sep {
  width: 6px;
  height: 20px;
  flex: none;
  background: linear-gradient(#bdbdbd, #bdbdbd) center / 1px 100% no-repeat;
}
.drop {
  width: 8px;
  height: 22px;
  flex: none;
  margin-left: 0;
  position: relative;
}
.drop::after {
  content: "";
  position: absolute;
  top: 9px;
  left: 1px;
  border: 3.5px solid transparent;
  border-top: 4px solid #111;
}
.scale-box {
  width: 148px;
  height: 23px;
  flex: none;
  margin-left: 9px;
  padding: 0 5px 0 3px;
  display: flex;
  align-items: center;
  justify-content: space-between;
  background-color: #fff;
  border: 1px solid #acacac;
  font-size: 13.500px;
}
.scale-arrow {
  width: 12px;
  height: 10px;
}
.overflow {
  width: 12px;
  height: 27px;
  flex: none;
  margin: 0 0 -2px auto;
  background: linear-gradient(180deg, #f0f0f0 30%, #a9a9a9);
  position: relative;
}
.overflow::after {
  content: "";
  position: absolute;
  left: 3px;
  top: 19px;
  width: 0;
  height: 0;
  border: 3px solid transparent;
  border-top: 4px solid #222;
}

/* Main area */
.workspace {
  flex: 1;
  display: flex;
  min-height: 0;
}
.rail {
  width: 25px;
  flex: none;
  display: flex;
  flex-direction: column;
}
.rail-left {
  padding-top: 3px;
  background-color: #f0f0f0;
}
.rail-right {
  padding: 2px 0 0 2px;
  gap: 14px;
  background-color: #fbfbfb;
}
.rail-tab {
  display: flex;
  flex-direction: column;
  align-items: center;
  background-color: #f2f2f2;
  border: 1px solid #a8a8a8;
  font-family: "Liberation Sans", sans-serif;
  font-size: 14px;
  color: #777;
}
.rail-tab span {
  writing-mode: vertical-rl;
  margin-top: 3px;
  letter-spacing: .2px;
}
.tab-icon {
  width: 18px;
  height: 18px;
  margin-top: 2px;
  flex: none;
}
.tab-identify {
  width: 23px;
  height: 76px;
  border-left: none;
  border-bottom: none;
  border-radius: 0 4px 0 0;
}
.tab-catalog {
  width: 23px;
  height: 79px;
  border-right: none;
  border-radius: 4px 0 0 4px;
}
.tab-search {
  width: 23px;
  height: 75px;
  border-right: none;
  border-radius: 4px 0 0 4px;
}
.center {
  flex: 1;
  min-width: 0;
  display: flex;
  flex-direction: column;
  background-color: #f0f0f0;
}

/* Dock panels */
.dock-header {
  flex: none;
  display: flex;
  align-items: center;
  justify-content: space-between;
  height: 30px;
  padding: 1px 4px 0;
  font-size: 18px;
  color: #1a2533;
}
.header-python {
  background: linear-gradient(90deg, #9db5d3, #aac2de 60%, #b9d0e9);
}
.header-toc {
  background: linear-gradient(90deg, #c0cedd, #d7e3f0);
}
.dock-btns {
  display: flex;
  gap: 7px;
  align-items: center;
  margin-bottom: 3px;
}
.dock-btns svg {
  width: 10px;
  height: 10px;
  display: block;
}
.python-panel {
  height: 234px;
  flex: none;
  display: flex;
  flex-direction: column;
  background-color: #f0f0f0;
}
.python-body {
  height: 198px;
  flex: none;
  display: flex;
  padding-left: 1px;
  padding-right: 2px;
  border-top: 1px solid #6e6e6e;
}
.console {
  flex: 1;
  margin: 0;
  padding: 3px 0 0 1px;
  min-width: 0;
  background-color: #fff;
  border-left: 1px solid #777;
  font-family: "Liberation Mono", monospace;
  font-size: 20px;
  line-height: 22px;
  color: #222;
  overflow: hidden;
}
.console .out {
  color: #b3b3b3;
}
.caret {
  display: inline-block;
  width: 1.500px;
  height: 20px;
  vertical-align: -4px;
  background-color: #111;
}
.splitter {
  width: 9px;
  flex: none;
  background: linear-gradient(90deg, #e3e3e3, #f7f7f7);
  border-right: 2px solid #707070;
}
.help-pane {
  width: 245px;
  flex: none;
  background-color: #fff;
}

/* Table of contents */
.lower {
  flex: 1;
  min-height: 0;
  display: flex;
  gap: 4px;
}
.toc-panel {
  width: 394px;
  flex: none;
  display: flex;
  flex-direction: column;
}
.toc-tools {
  height: 26px;
  flex: none;
  display: flex;
  align-items: center;
  padding-left: 4px;
  background: linear-gradient(180deg, #fdfdfd, #eaeaea);
}
.tt {
  width: 22px;
  height: 22px;
  padding: 2px;
  flex: none;
  display: block;
}
.toc-tools .sep {
  width: 3px;
  height: 16px;
  margin-right: 3px;
}
.tree {
  height: 677px;
  width: 393px;
  flex: none;
  padding-top: 1px;
  background-color: #fff;
  border: 1px solid #777;
  font-size: 14px;
}
.row {
  height: 23px;
  display: flex;
  align-items: center;
  color: #111;
}
.row-root {
  padding-left: 7px;
}
.row-layer {
  padding-left: 29px;
}
.row-legend {
  padding-left: 66px;
}
.minus {
  width: 11px;
  height: 11px;
  flex: none;
  border: 1px solid #9a9a9a;
  background: linear-gradient(90deg, #3c4f86, #3c4f86) center / 7px 1px no-repeat, linear-gradient(#f8f8f8, #dcdcdc);
}
.layers-icon {
  width: 17px;
  height: 17px;
  flex: none;
  margin: 0 3px 0 10px;
}
.check {
  width: 11px;
  height: 11px;
  flex: none;
  margin: 0 6px 0 11px;
  border: 1px solid #111;
  background-color: #fff;
}
.check svg {
  display: block;
  width: 9px;
  height: 9px;
}
.row-layer span {
  padding: 0 1px;
  line-height: 23px;
}
.row-layer .selected {
  margin-left: -1px;
  padding: 0 2px;
  background-color: #3399ff;
  color: #fff;
}
.legend-line {
  width: 15px;
  height: 2px;
  background-color: #68007f;
}
.swatch {
  width: 15px;
  height: 11px;
  border: 1px solid #777;
}
.swatch-green {
  background-color: #c5eccb;
}
.swatch-blue {
  background-color: #cce6f6;
}

/* Map */
.map-frame {
  flex: 1;
  min-width: 0;
  margin-top: 1px;
  margin-right: 1px;
  display: flex;
  flex-direction: column;
  background-color: #f0f0f0;
  border-left: 2px solid #6e6e6e;
  border-top: 1px solid #bbb;
}
.map-top {
  height: 710px;
  flex: none;
  display: flex;
}
.map {
  display: block;
  flex: none;
  background-color: #fff;
  shape-rendering: crispEdges;
}
.state {
  fill: #cce6f6;
  stroke: #6e6e6e;
  stroke-width: 1;
}
.counties polyline {
  fill: none;
  stroke: #6e6e6e;
  stroke-width: 1;
}
.roads polyline {
  fill: none;
  stroke: #68007f;
  stroke-width: 2.400;
  shape-rendering: auto;
}
.metro {
  fill: #68007f;
  stroke: #68007f;
  stroke-width: 2;
}
.metro-edge {
  fill: none;
  stroke: #68007f;
  stroke-width: 6;
  stroke-dasharray: 2 3;
}
.specks {
  fill: none;
  stroke: #cce6f6;
  stroke-width: 1.200;
}
.vscroll {
  width: 19px;
  margin-left: 1px;
  flex: none;
  display: flex;
  flex-direction: column;
  align-items: center;
}
.sb-arrow-v {
  width: 12px;
  height: 10px;
  margin: 6px 0;
  flex: none;
}
.vthumb {
  flex: 1;
  width: 100%;
  background-color: #c9c9c9;
}
.map-bottom {
  height: 21px;
  flex: none;
  margin-top: 1px;
  display: flex;
  align-items: center;
  border-top: 1px solid #e2e2e2;
  border-bottom: 1px solid #e2e2e2;
}
.view-tools {
  width: 76px;
  flex: none;
  align-self: flex-start;
  display: flex;
  align-items: center;
  padding-left: 2px;
}
.vt {
  width: 14px;
  height: 12px;
  padding: 0 1px;
  display: block;
  flex: none;
  margin-right: 1px;
}
.vt-on {
  outline: 1px solid #5da6e8;
  background-color: #d9ecfb;
}
.view-tools .sep {
  width: 8px;
  height: 10px;
}
.sb-arrow-h {
  width: 10px;
  height: 12px;
  flex: none;
  margin: 0 6px 0 5px;
}
.hthumb {
  flex: none;
  width: 1329px;
  height: 18px;
  background-color: #c9c9c9;
}
.hthumb + .sb-arrow-h {
  margin: 0 0 0 5px;
}

/* Status bar */
.statusbar {
  height: 25px;
  flex: none;
  position: relative;
  background-color: #efefef;
  border-bottom: 2px solid #8e8e8e;
}
.task-tab {
  position: absolute;
  left: 500px;
  bottom: -2px;
  width: 69px;
  height: 2px;
  background-color: #e2e2e2;
}
```
